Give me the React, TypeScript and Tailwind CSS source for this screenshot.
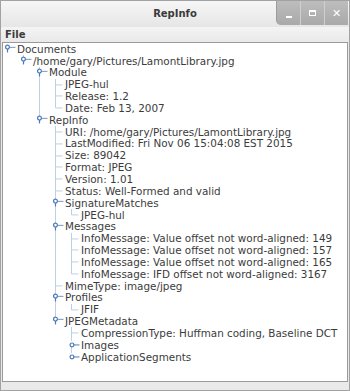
import React from "react";

type Node = { label: string; open?: boolean; closed?: boolean; children?: Node[] };

const tree: Node = {
  label: "Documents",
  open: true,
  children: [
    {
      label: "/home/gary/Pictures/LamontLibrary.jpg",
      open: true,
      children: [
        {
          label: "Module",
          open: true,
          children: [{ label: "JPEG-hul" }, { label: "Release: 1.2" }, { label: "Date: Feb 13, 2007" }],
        },
        {
          label: "RepInfo",
          open: true,
          children: [
            { label: "URI: /home/gary/Pictures/LamontLibrary.jpg" },
            { label: "LastModified: Fri Nov 06 15:04:08 EST 2015" },
            { label: "Size: 89042" },
            { label: "Format: JPEG" },
            { label: "Version: 1.01" },
            { label: "Status: Well-Formed and valid" },
            { label: "SignatureMatches", open: true, children: [{ label: "JPEG-hul" }] },
            {
              label: "Messages",
              open: true,
              children: [
                { label: "InfoMessage: Value offset not word-aligned: 149" },
                { label: "InfoMessage: Value offset not word-aligned: 157" },
                { label: "InfoMessage: Value offset not word-aligned: 165" },
                { label: "InfoMessage: IFD offset not word-aligned: 3167" },
              ],
            },
            { label: "MimeType: image/jpeg" },
            { label: "Profiles", open: true, children: [{ label: "JFIF" }] },
            {
              label: "JPEGMetadata",
              open: true,
              children: [
                { label: "CompressionType: Huffman coding, Baseline DCT" },
                { label: "Images", closed: true },
                { label: "ApplicationSegments", closed: true },
              ],
            },
          ],
        },
      ],
    },
  ],
};

type Row = { node: Node; level: number; last: boolean; lasts: boolean[] };

function flatten(n: Node, level: number, last: boolean, lasts: boolean[], out: Row[]) {
  out.push({ node: n, level, last, lasts });
  const kids = n.children ?? [];
  kids.forEach((c, i) => flatten(c, level + 1, i === kids.length - 1, [...lasts, last], out));
  return out;
}

const rows = flatten(tree, 0, true, [], []);
const H = 11.85;
const LINE = "#bccfe3";
const BLUE = "#4a78b8";

function Guides({ row }: { row: Row }) {
  const { level, last, lasts, node } = row;
  const w = 13 + 16 * level;
  const col = (k: number) => 4.5 + 16 * k;
  const c = H / 2;
  const icon = node.open || node.closed;
  return (
    <svg width={w} height={H} viewBox={`0 0 ${w} ${H}`} className="shrink-0 overflow-visible">
      {lasts.map((l, k) =>
        k >= 1 && !l ? <line key={k} x1={col(k)} x2={col(k)} y1={0} y2={H} stroke={LINE} strokeWidth={1} /> : null
      )}
      {level >= 1 && (
        <line x1={col(level)} x2={col(level)} y1={0} y2={icon ? c - 4 : c} stroke={LINE} strokeWidth={1} />
      )}
      {level >= 1 && !last && (
        <line x1={col(level)} x2={col(level)} y1={c} y2={H} stroke={LINE} strokeWidth={1} />
      )}
      {!icon && <line x1={col(level)} x2={col(level) + 7} y1={c} y2={c} stroke={LINE} strokeWidth={1} />}
      {node.open && (
        <g stroke={BLUE} strokeWidth={1.2} fill="white">
          <line x1={col(level) + 2} x2={col(level) + 8} y1={c - 1.5} y2={c - 1.5} stroke="#8aa6cc" />
          <line x1={col(level)} x2={col(level)} y1={c} y2={c + 3.5} />
          <circle cx={col(level)} cy={c - 1.8} r={1.9} />
        </g>
      )}
      {node.closed && (
        <g stroke={BLUE} strokeWidth={1.2} fill="white">
          <line x1={col(level) + 1} x2={col(level) + 8} y1={c} y2={c} stroke="#6f93c4" />
          <circle cx={col(level) + 0.5} cy={c} r={1.9} />
        </g>
      )}
    </svg>
  );
}

function WinButton({ children, first }: { children: React.ReactNode; first?: boolean }) {
  return (
    <div
      className={`w-[24px] h-[24px] flex items-center justify-center bg-gradient-to-b from-[#bdbdbd] to-[#a9a9a9] border-l border-[#cfcfcf] ${
        first ? "rounded-bl-[5px] border-l-[#9c9c9c]" : ""
      }`}
    >
      {children}
    </div>
  );
}

export default function App() {
  return (
    <div
      className="w-[350px] h-[391px] flex flex-col bg-[#e9e9e9] border border-[#a2a2a2] text-[#333333]"
      style={{ fontFamily: '"DejaVu Sans", sans-serif' }}
    >
      <div className="h-[26px] flex bg-gradient-to-b from-[#f6f6f6] to-[#e6e6e6] shrink-0">
        <div className="w-[73px]" />
        <div className="flex-1 flex items-center justify-center text-[10px] font-bold text-[#3a3a3a] pb-[1px]">
          RepInfo
        </div>
        <div className="w-[73px] flex items-start">
          <WinButton first>
            <div className="w-[6px] h-[2px] bg-white mt-[7px]" />
          </WinButton>
          <WinButton>
            <div className="w-[7px] h-[6px] border-[1.5px] border-white border-t-2" />
          </WinButton>
          <WinButton>
            <span className="text-white text-[11px] font-bold leading-none">✕</span>
          </WinButton>
        </div>
      </div>
      <div className="h-[15px] flex items-center px-[4px] text-[10px] font-bold text-[#3a3a3a] bg-gradient-to-b from-[#f4f4f4] to-[#e9e9e9] shrink-0">
        File
      </div>
      <div className="flex-1 mx-[1px] border border-[#9a9a9a] bg-white overflow-hidden">
        {rows.map((r, i) => (
          <div key={i} className="flex items-center whitespace-nowrap" style={{ height: H }}>
            <Guides row={r} />
            <span className="ml-[1px] text-[10.4px] leading-none text-[#3c3c3c]">{r.node.label}</span>
          </div>
        ))}
      </div>
      <div className="h-[8px] shrink-0" />
    </div>
  );
}
